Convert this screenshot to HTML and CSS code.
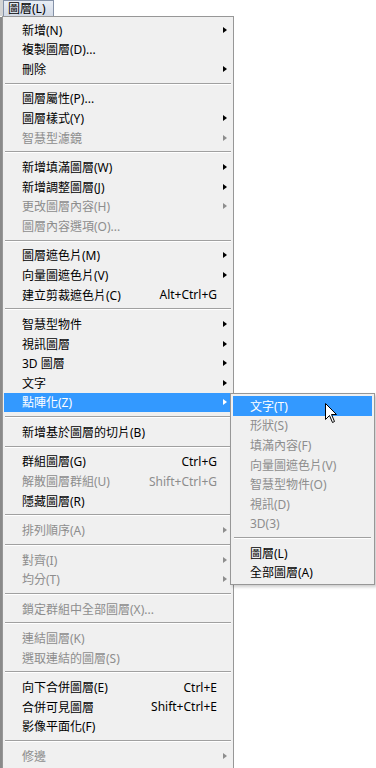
FILE: index.html
```html
<!DOCTYPE html>
<html>
<head>
  <title>圖層選單</title>
  <link rel="stylesheet" href="styles.css">
</head>
<body>
  <div class="screen">
    <div class="edge"></div>

    <div class="stack">
      <!-- Menu bar: only the open entry is visible -->
      <div class="menubar">
        <span class="menubar-item">圖層(L)</span>
      </div>

      <!-- Layer menu -->
      <div class="menu main-menu">
        <div class="item"><span class="label">新增(N)</span><span class="key"></span><span class="arrow"></span></div>
        <div class="item"><span class="label">複製圖層(D)...</span><span class="key"></span><span></span></div>
        <div class="item"><span class="label">刪除</span><span class="key"></span><span class="arrow"></span></div>
        <div class="sep"></div>
        <div class="item"><span class="label">圖層屬性(P)...</span><span class="key"></span><span></span></div>
        <div class="item"><span class="label">圖層樣式(Y)</span><span class="key"></span><span class="arrow"></span></div>
        <div class="item off"><span class="label">智慧型濾鏡</span><span class="key"></span><span class="arrow"></span></div>
        <div class="sep"></div>
        <div class="item"><span class="label">新增填滿圖層(W)</span><span class="key"></span><span class="arrow"></span></div>
        <div class="item"><span class="label">新增調整圖層(J)</span><span class="key"></span><span class="arrow"></span></div>
        <div class="item off"><span class="label">更改圖層內容(H)</span><span class="key"></span><span class="arrow"></span></div>
        <div class="item off"><span class="label">圖層內容選項(O)...</span><span class="key"></span><span></span></div>
        <div class="sep"></div>
        <div class="item"><span class="label">圖層遮色片(M)</span><span class="key"></span><span class="arrow"></span></div>
        <div class="item"><span class="label">向量圖遮色片(V)</span><span class="key"></span><span class="arrow"></span></div>
        <div class="item"><span class="label">建立剪裁遮色片(C)</span><span class="key">Alt+Ctrl+G</span><span></span></div>
        <div class="sep"></div>
        <div class="item"><span class="label">智慧型物件</span><span class="key"></span><span class="arrow"></span></div>
        <div class="item"><span class="label">視訊圖層</span><span class="key"></span><span class="arrow"></span></div>
        <div class="item"><span class="label">3D 圖層</span><span class="key"></span><span class="arrow"></span></div>
        <div class="item"><span class="label">文字</span><span class="key"></span><span class="arrow"></span></div>
        <div class="item active"><span class="label">點陣化(Z)</span><span class="key"></span><span class="arrow"></span></div>
        <div class="sep"></div>
        <div class="item"><span class="label">新增基於圖層的切片(B)</span><span class="key"></span><span></span></div>
        <div class="sep"></div>
        <div class="item"><span class="label">群組圖層(G)</span><span class="key">Ctrl+G</span><span></span></div>
        <div class="item off"><span class="label">解散圖層群組(U)</span><span class="key">Shift+Ctrl+G</span><span></span></div>
        <div class="item"><span class="label">隱藏圖層(R)</span><span class="key"></span><span></span></div>
        <div class="sep"></div>
        <div class="item off"><span class="label">排列順序(A)</span><span class="key"></span><span class="arrow"></span></div>
        <div class="sep"></div>
        <div class="item off"><span class="label">對齊(I)</span><span class="key"></span><span class="arrow"></span></div>
        <div class="item off"><span class="label">均分(T)</span><span class="key"></span><span class="arrow"></span></div>
        <div class="sep"></div>
        <div class="item off"><span class="label">鎖定群組中全部圖層(X)...</span><span class="key"></span><span></span></div>
        <div class="sep"></div>
        <div class="item off"><span class="label">連結圖層(K)</span><span class="key"></span><span></span></div>
        <div class="item off"><span class="label">選取連結的圖層(S)</span><span class="key"></span><span></span></div>
        <div class="sep"></div>
        <div class="item"><span class="label">向下合併圖層(E)</span><span class="key">Ctrl+E</span><span></span></div>
        <div class="item"><span class="label">合併可見圖層</span><span class="key">Shift+Ctrl+E</span><span></span></div>
        <div class="item"><span class="label">影像平面化(F)</span><span class="key"></span><span></span></div>
        <div class="sep"></div>
        <div class="item off"><span class="label">修邊</span><span class="key"></span><span class="arrow"></span></div>
      </div>
    </div>

    <!-- Rasterize submenu, opened over the main menu -->
    <div class="menu submenu">
      <div class="item active"><span class="label">文字(T)</span></div>
      <div class="item off"><span class="label">形狀(S)</span></div>
      <div class="item off"><span class="label">填滿內容(F)</span></div>
      <div class="item off"><span class="label">向量圖遮色片(V)</span></div>
      <div class="item off"><span class="label">智慧型物件(O)</span></div>
      <div class="item off"><span class="label">視訊(D)</span></div>
      <div class="item off"><span class="label">3D(3)</span></div>
      <div class="sep"></div>
      <div class="item"><span class="label">圖層(L)</span></div>
      <div class="item"><span class="label">全部圖層(A)</span></div>
    </div>

    <svg class="cursor" width="13" height="21" viewBox="0 0 13 21">
      <path d="M0.5 0.5 L0.5 16.5 L4.5 12.5 L7.5 19.5 L9.5 18.5 L6.5 11.5 L11.5 11.5 Z" fill="#fff" stroke="#000" stroke-width="1"/>
    </svg>
  </div>
</body>
</html>
```

FILE: styles.css
```css
body {
  margin: 0;
  background-color: #fff;
  font-family: "Noto Sans", "Noto Sans CJK TC", sans-serif;
  font-size: 12px;
  color: #000;
  overflow: hidden;
}

.screen {
  position: relative;
  display: flex;
  width: 376px;
  height: 768px;
  overflow: hidden;
}

/* bit of the window behind the menu */
.edge {
  width: 2px;
  flex-shrink: 0;
  margin-top: 17px;
  background-color: #8a8a8a;
}

.stack {
  display: flex;
  flex-direction: column;
}

.menubar {
  display: flex;
  height: 17px;
  margin-left: -2px;
}

.menubar::before {
  content: "";
  width: 3px;
  background-color: #d4d4d4;
}

.menubar-item {
  display: flex;
  align-items: center;
  padding: 0 7px 0 4px;
  border: 1px solid #8592a8;
  border-bottom: none;
  background: linear-gradient(#e8edf5, #d3dae6);
  line-height: 15px;
}

.menu {
  background-color: #f0f0f0;
  border: 1px solid #979797;
}

.main-menu {
  width: 228px;
  padding: 3px 1px;
}

.item {
  display: grid;
  grid-template-columns: 1fr auto 12px;
  align-items: center;
  height: 19.6px;
  padding-left: 18px;
  white-space: nowrap;
}

.item .key {
  padding-right: 3px;
}

.item .arrow {
  width: 0;
  height: 0;
  margin-left: 3px;
  border-top: 3.5px solid transparent;
  border-bottom: 3.5px solid transparent;
  border-left: 4px solid #000;
}

.item.off {
  color: #8d8d8d;
}

.item.off .arrow {
  border-left-color: #8d8d8d;
}

.item.active {
  background-color: #3399ff;
  color: #fff;
}

.item.active .arrow {
  border-left-color: #fff;
}

.sep {
  height: 9.9px;
  display: flex;
  align-items: center;
  padding: 0 1px;
}

.sep::after {
  content: "";
  flex: 1;
  height: 1px;
  border-bottom: 1px solid #fff;
  background-color: #a0a0a0;
}

.submenu {
  position: absolute;
  left: 230px;
  top: 393px;
  width: 139px;
  padding: 2px;
  box-shadow: 2px 2px 3px rgba(0, 0, 0, 0.2);
}

.submenu .item {
  grid-template-columns: 1fr;
  padding-left: 17px;
}

.cursor {
  position: absolute;
  left: 325px;
  top: 403px;
}
```
